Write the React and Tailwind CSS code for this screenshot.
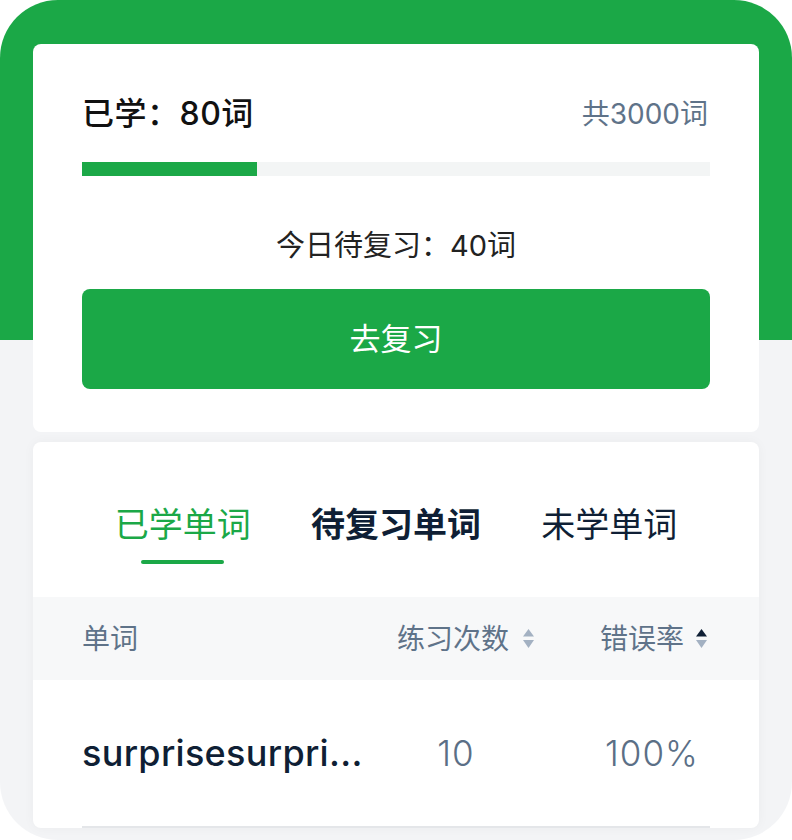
const font = { fontFamily: 'Inter, "Noto Sans CJK SC", sans-serif' }

// stacked up/down sort arrows; `active` darkens the one in use
function SortIcon({ active }) {
  return (
    <svg width="11" height="19" viewBox="0 0 11 19" className="shrink-0">
      <path d="M5.5 0 L11 7.5 L0 7.5 Z" fill={active === 'up' ? '#0f1f35' : '#a3b1c2'} />
      <path d="M0 11 L11 11 L5.5 19 Z" fill={active === 'down' ? '#0f1f35' : '#a3b1c2'} />
    </svg>
  )
}

const tabs = [
  { label: '已学单词', active: true },
  { label: '待复习单词', bold: true },
  { label: '未学单词' },
]

export default function App() {
  return (
    <div
      style={font}
      className="h-[840px] w-[792px] overflow-hidden rounded-[58px] bg-[linear-gradient(to_bottom,#1ba847_340px,#f3f4f6_340px)] px-[33px] pt-[44px]"
    >
      {/* ---- progress card ---- */}
      <section className="rounded-lg bg-white px-[49px] pb-[43px] pt-[50px]">
        <div className="flex h-[40px] items-center justify-between">
          <span className="text-[32px] font-medium tracking-[0.5px] text-[#111]">已学：80词</span>
          <span className="pr-[2px] text-[28px] text-[#5f7389]">共3000词</span>
        </div>
        <div className="mt-[28px] h-[14px] bg-[#f3f5f5]">
          <div className="h-full w-[175px] bg-[#1ba847]" />
        </div>
        <p className="mt-[50px] flex h-[40px] items-center justify-center text-[29px] text-[#222]">今日待复习：40词</p>
        <button className="mt-[23px] flex h-[100px] w-full items-center justify-center rounded-lg bg-[#1ba847] text-[31px] text-white">
          去复习
        </button>
      </section>

      {/* ---- word list card ---- */}
      <section className="mt-[10px] rounded-lg bg-white pt-[60px] shadow-[0_0_12px_rgba(0,0,0,0.04)]">
        <div className="grid grid-cols-3 px-[43px]">
          {tabs.map((t) => (
            <div key={t.label} className="flex flex-col items-center">
              <span
                className={`flex h-[44px] items-center text-[34px] ${
                  t.active ? 'text-[#1ba847]' : t.bold ? 'font-semibold text-[#0f1f35]' : 'text-[#0f1f35]'
                }`}
              >
                {t.label}
              </span>
              <span className={`mt-[14px] h-[4px] w-[83px] rounded-full ${t.active ? 'bg-[#1ba847]' : 'bg-transparent'}`} />
            </div>
          ))}
        </div>

        <div className="mt-[33px] flex h-[83px] items-center bg-[#f7f8f9] px-[49px] text-[28px] text-[#5f7389]">
          <span className="w-[296px]">单词</span>
          <span className="flex w-[156px] items-center gap-[14px] pl-[19px]">
            练习次数 <SortIcon />
          </span>
          <span className="flex flex-1 items-center gap-[12px] pl-[66px]">
            错误率 <SortIcon active="up" />
          </span>
        </div>

        <div className="mx-[49px] flex h-[148px] items-center border-b-2 border-[#e4e6e9]">
          <span className="w-[296px] text-[36px] font-medium tracking-[0.3px] text-[#0f1f35]">surprisesurpri...</span>
          <span className="w-[156px] text-center text-[35px] font-light tracking-[1px] text-[#5b6f86]">10</span>
          <span className="flex-1 pl-[60px] text-center text-[35px] font-light tracking-[1px] text-[#5b6f86]">100%</span>
        </div>
      </section>
    </div>
  )
}
